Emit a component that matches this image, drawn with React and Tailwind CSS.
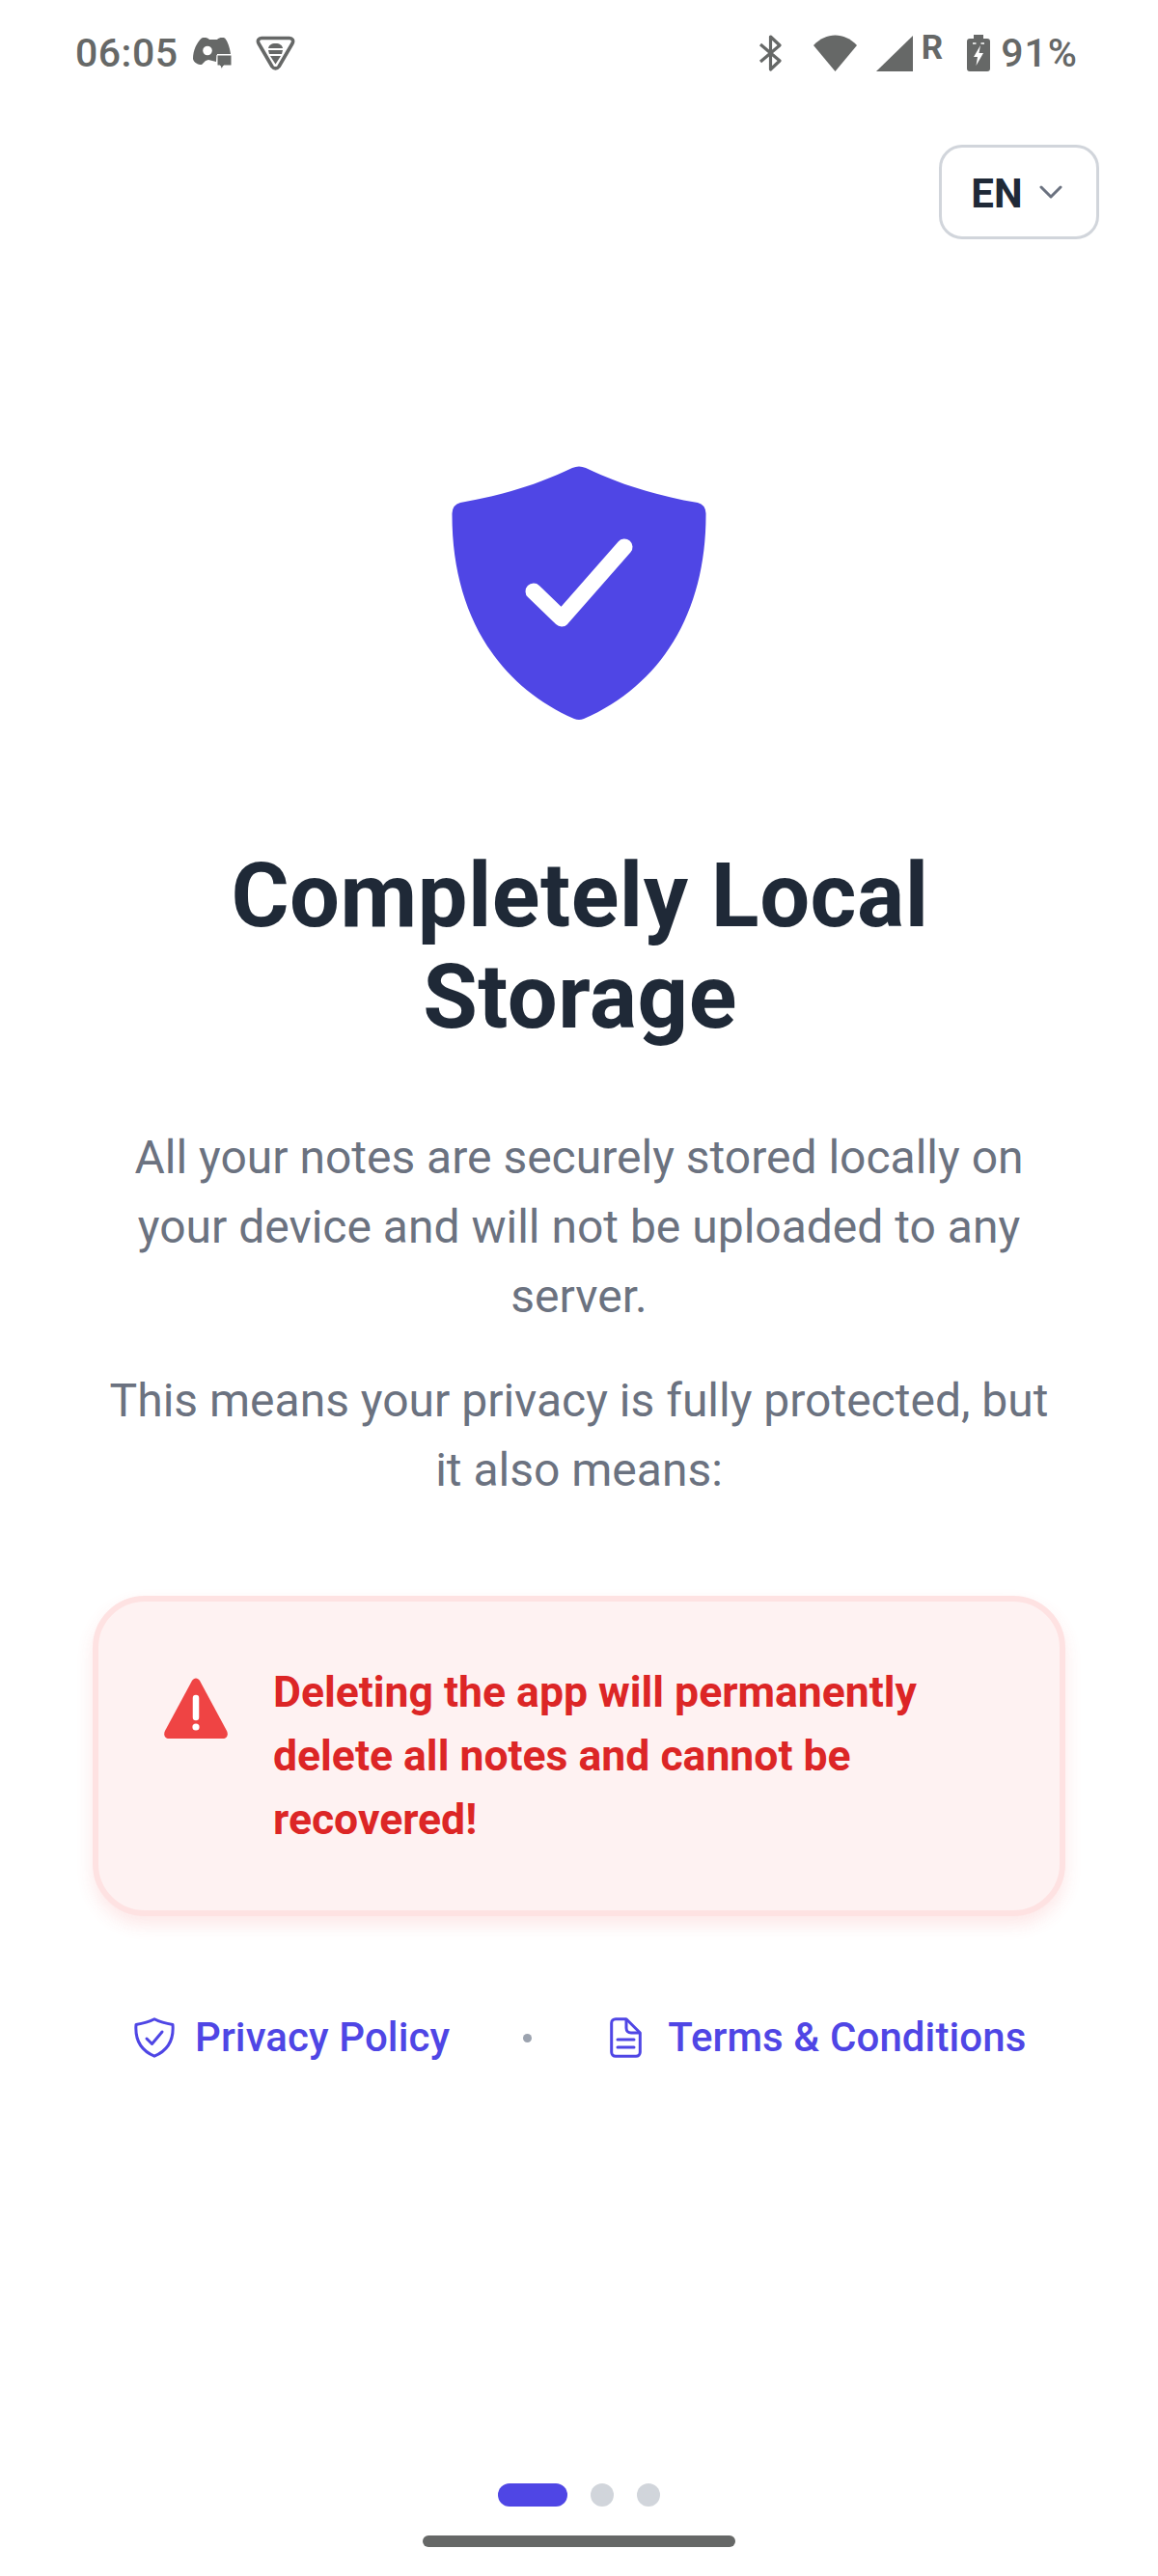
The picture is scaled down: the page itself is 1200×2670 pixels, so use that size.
import React from "react";

function Controller() {
  return (
    <svg width="40" height="34" viewBox="0 0 40 34" className="block">
      <path d="M9 1.5 C12 0.5 15 1 17 3 L25 3 C27 1 30 0.5 33 1.5 C36 5 38 11 39 18 L25 18 L24 26 L16 24 L13 25 L9 29 C5 29 1 27 0 23 C0 14 4 6 9 1.5 Z" fill="#666867" />
      <circle cx="15" cy="14.5" r="4.8" fill="#fff" />
      <path d="M25 19 H40 V30 H32 L29.5 33.5 L28 30 H25 Z" fill="#666867" stroke="#fff" strokeWidth="1" />
    </svg>
  );
}

function BugTriangle() {
  return (
    <svg width="41" height="36" viewBox="0 0 41 36" className="block">
      <path d="M6 2.5 H35 C38 2.5 39.5 5 38 8 L24 32 C22 34.5 19 34.5 17 32 L3 8 C1.5 5 3 2.5 6 2.5 Z" fill="none" stroke="#666867" strokeWidth="3.6" strokeLinejoin="round" />
      <path d="M13 13 C13.5 10 16 8 20.5 8 C25 8 27.5 10 28 13 Z" fill="#666867" />
      <path d="M13 15 H28 L27 19 H14 Z M15 21 H26 L20.5 29.5 Z" fill="#666867" />
    </svg>
  );
}

function Bluetooth() {
  return (
    <svg width="25" height="38" viewBox="0 0 25 38" className="block">
      <path d="M2 10 L22 27 L12.5 36 V2 L22 11 L2 28" fill="none" stroke="#666867" strokeWidth="3.2" strokeLinejoin="round" />
    </svg>
  );
}

function Wifi() {
  return (
    <svg width="45" height="38" viewBox="0 0 45 38" className="block">
      <path d="M0 11 C13 -3 32 -3 45 11 L22.5 38 Z" fill="#666867" />
    </svg>
  );
}

function Signal() {
  return (
    <svg width="38" height="37" viewBox="0 0 38 37" className="block">
      <path d="M38 0 V37 H0 Z" fill="#666867" />
    </svg>
  );
}

function BatteryCharging() {
  return (
    <svg width="24" height="38" viewBox="0 0 24 38" className="block">
      <path d="M7 0 H17 V4 H21 C23 4 24 5 24 7 V35 C24 37 23 38 21 38 H3 C1 38 0 37 0 35 V7 C0 5 1 4 3 4 H7 Z" fill="#666867" />
      <path d="M6 9 H9.5 M14.5 9 H18" stroke="#fff" strokeWidth="1.5" />
      <path d="M14 11 L7 23 H11 L9.5 32 L17 19 H12.5 Z" fill="#fff" />
    </svg>
  );
}

function BigShield() {
  return (
    <svg width="264" height="264" viewBox="28 23 264 264" className="block">
      <path d="M153 25 Q160 22 167 25 C200 41 240 54 283 61 Q291 63 291.5 72 C292 175 245 250 165 285 Q160 287 155 285 C75 250 28 175 28.5 72 Q29 63 37 61 C80 54 120 41 153 25 Z" fill="#4f46e5" />
      <path d="M113 153 L142 181 L207 107" fill="none" stroke="#fff" strokeWidth="17" strokeLinecap="round" strokeLinejoin="round" />
    </svg>
  );
}

function AlertIcon() {
  return (
    <svg width="66" height="63" viewBox="0 0 66 63" className="block">
      <path d="M29 3 C31 -0.5 35 -0.5 37 3 L65 55 C67 59 65 63 61 63 H5 C1 63 -1 59 1 55 Z" fill="#ef4444" />
      <path d="M33 21 V41" stroke="#fff" strokeWidth="6.5" strokeLinecap="round" />
      <circle cx="33" cy="51" r="3.6" fill="#fff" />
    </svg>
  );
}

function OutlineShield() {
  return (
    <svg width="42" height="42" viewBox="0 0 42 42" className="block">
      <path d="M21 1.8 C27 5 33 6.5 40 7.5 C41 20 38 33 21 40.2 C4 33 1 20 2 7.5 C9 6.5 15 5 21 1.8 Z" fill="none" stroke="#4f46e5" strokeWidth="3" strokeLinejoin="round" />
      <path d="M13 22 L18.5 27.5 L29 15" fill="none" stroke="#4f46e5" strokeWidth="3" strokeLinecap="round" strokeLinejoin="round" />
    </svg>
  );
}

function DocIcon() {
  return (
    <svg width="33" height="42" viewBox="0 0 33 42" className="block">
      <path d="M6 1.7 H17 L31.3 16 V36 C31.3 38.5 29.5 40.3 27 40.3 H6 C3.5 40.3 1.7 38.5 1.7 36 V6 C1.7 3.5 3.5 1.7 6 1.7 Z" fill="none" stroke="#4f46e5" strokeWidth="3" strokeLinejoin="round" />
      <path d="M17 1.7 V11 C17 14 19 16 22 16 H31.3" fill="none" stroke="#4f46e5" strokeWidth="3" />
      <path d="M8 23 H25 M8 31 H25" stroke="#4f46e5" strokeWidth="3" strokeLinecap="round" />
    </svg>
  );
}

export default function App() {
  return (
    <div className="flex h-[2670px] w-[1200px] flex-col bg-white font-['Roboto',sans-serif]">
      <div className="flex h-[110px] shrink-0 items-center justify-between pl-[78px] pr-[83px] text-[#666867]">
        <div className="flex items-center">
          <span className="text-[41px] font-medium leading-none tracking-[0.5px]">06:05</span>
          <span className="ml-[15px]"><Controller /></span>
          <span className="ml-[25px]"><BugTriangle /></span>
        </div>
        <div className="flex items-center">
          <Bluetooth />
          <span className="ml-[32px]"><Wifi /></span>
          <span className="ml-[20px]"><Signal /></span>
          <span className="mb-[12px] ml-[9px] text-[35px] font-bold leading-none">R</span>
          <span className="ml-[25px]"><BatteryCharging /></span>
          <span className="ml-[11px] text-[41px] font-medium leading-none tracking-[1px]">91%</span>
        </div>
      </div>

      <div className="mt-[40px] flex justify-end pr-[61px]">
        <div className="flex h-[98px] w-[166px] items-center justify-center gap-[17px] rounded-[24px] border-[3px] border-[#d1d5db] pr-[5px]">
          <span className="mt-[3px] text-[42px] font-bold leading-none text-[#1f2937]">EN</span>
          <svg width="24" height="14" viewBox="0 0 24 14" className="block"><path d="M2 2 L12 12 L22 2" fill="none" stroke="#6b7280" strokeWidth="3" strokeLinecap="round" strokeLinejoin="round" /></svg>
        </div>
      </div>

      <div className="mt-[235px] flex justify-center"><BigShield /></div>

      <h1 className="mt-[129px] pl-[2px] text-center text-[92px] font-bold leading-[105px] tracking-[0.5px] text-[#1f2937]">
        Completely Local<br />Storage
      </h1>

      <div className="mt-[78px] flex flex-col gap-[36px] px-[96px] text-center text-[48px] leading-[72px] text-[#6b7280]">
        <p>All your notes are securely stored locally on<br />your device and will not be uploaded to any<br />server.</p>
        <p>This means your privacy is fully protected, but<br />it also means:</p>
      </div>

      <div className="mx-[96px] mt-[94px] flex items-start gap-[47px] rounded-[54px] border-[6px] border-[#fee2e2] bg-[#fef2f2] py-[61px] pl-[68px] pr-[40px] shadow-[0_9px_18px_rgba(239,68,68,0.12)]">
        <span className="mt-[18px] shrink-0"><AlertIcon /></span>
        <p className="text-[44.5px] font-bold leading-[66px] text-[#dc2626]">Deleting the app will permanently<br />delete all notes and cannot be<br />recovered!</p>
      </div>

      <div className="mt-[105px] flex items-center pl-[139px] text-[42px] font-medium leading-none tracking-[0.1px] text-[#4f46e5]">
        <OutlineShield />
        <span className="ml-[21px]">Privacy Policy</span>
        <span className="ml-[76px] h-[9px] w-[9px] rounded-full bg-[#9ca3af]" />
        <span className="ml-[81px]"><DocIcon /></span>
        <span className="ml-[27px]">Terms &amp; Conditions</span>
      </div>

      <div className="mt-auto flex flex-col items-center">
        <div className="flex items-center gap-[24px]">
          <div className="h-[24px] w-[72px] rounded-full bg-[#4f46e5]" />
          <div className="h-[24px] w-[24px] rounded-full bg-[#d1d5db]" />
          <div className="h-[24px] w-[24px] rounded-full bg-[#d1d5db]" />
        </div>
        <div className="mb-[30px] mt-[30px] h-[12px] w-[324px] rounded-full bg-[#666867]" />
      </div>
    </div>
  );
}
